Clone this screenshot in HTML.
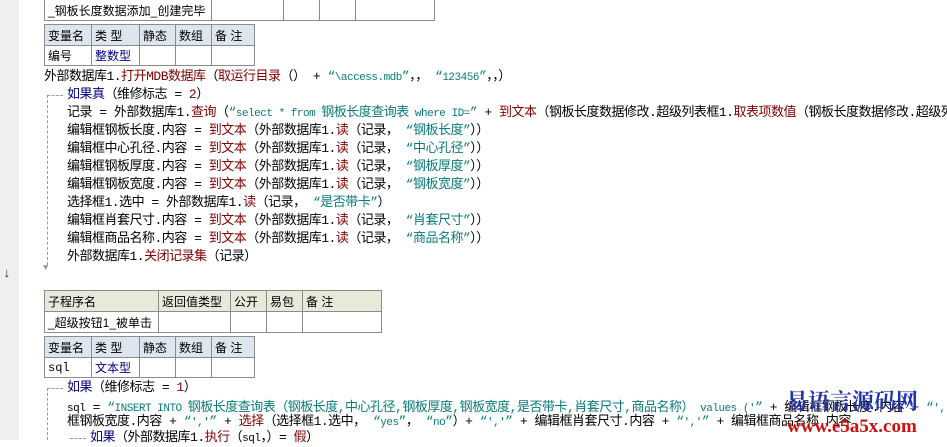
<!DOCTYPE html>
<html><head><meta charset="utf-8"><style>
html,body{margin:0;padding:0;}
body{width:947px;height:440px;overflow:hidden;background:#fff;position:relative;font-family:"Liberation Mono","Noto Sans CJK SC",monospace;font-size:13px;color:#000;}
.gut{position:absolute;left:0;top:0;width:19px;height:440px;background:#f0f0f0;}
.l{position:absolute;white-space:pre;line-height:16px;height:16px;letter-spacing:-0.5px;}
.k{color:#000080}.f{color:#800000}.s{color:#0a7a7a}.m{font-family:"Liberation Mono",monospace;font-size:11px;}
table{position:absolute;border-collapse:collapse;table-layout:fixed;font-family:"Liberation Sans","Noto Sans CJK SC",sans-serif;}
td{border:1px solid #8c8c8c;padding:0 2px 0 3px;height:19px;font-size:12px;white-space:nowrap;overflow:hidden;box-sizing:border-box;}
.hb td{background:#dde5ee;}
.hg td{background:#e6ead9;}
.t{color:#000080}
.dash{position:absolute;border-left:1px dashed #999;}
.dh{position:absolute;border-top:1px dashed #999;height:0;}
.wm1{position:absolute;left:786px;top:389px;font-family:"Noto Serif CJK SC",serif;font-weight:bold;font-size:22px;line-height:24px;color:#2233aa;white-space:nowrap;}
.wm2{position:absolute;left:787px;top:416px;font-family:"Liberation Serif",serif;font-weight:bold;font-size:19px;line-height:22px;color:#cc1111;white-space:nowrap;}
</style></head><body>
<div class="gut"></div>
<div class="l" style="left:3px;top:266px;color:#1a2a6a;font-weight:bold;">↓</div>

<table style="left:44px;top:-1px;width:390px;"><colgroup><col style="width:167px"><col style="width:72px"><col style="width:36px"><col style="width:36px"><col style="width:79px"></colgroup><tr>
<td style="height:21px">_钢板长度数据添加_创建完毕</td><td></td><td></td><td></td><td></td></tr></table>

<table style="left:44px;top:24px;width:210px;"><colgroup><col style="width:47px"><col style="width:48px"><col style="width:36px"><col style="width:36px"><col style="width:43px"></colgroup>
<tr class="hb"><td style="height:21px">变量名</td><td>类 型</td><td>静态</td><td>数组</td><td>备 注</td></tr>
<tr><td style="height:20px">编号</td><td class="t">整数型</td><td></td><td></td><td></td></tr></table>

<div class="l" style="left:44px;top:69px;">外部数据库1.<span class="f">打开MDB数据库</span>（<span class="f">取运行目录</span>（） + <span class="s">“<span class="m">\access.mdb</span>”</span>，， <span class="s">“<span class="m">123456</span>”</span>，，）</div>
<div class="dh" style="left:47px;top:95px;width:16px;"></div>
<div class="dash" style="left:47px;top:95px;height:170px;"></div>
<div class="l" style="left:43px;top:260px;color:#999;font-size:9px;">▼</div>
<div class="l" style="left:67px;top:87px;"><span class="k">如果真</span>（维修标志 = <span class="f">2</span>）</div>
<div class="l" style="left:67px;top:105px;">记录 = 外部数据库1.<span class="f">查询</span>（<span class="s">“<span class="m">select * from </span>钢板长度查询表<span class="m"> where ID=</span>”</span> + <span class="f">到文本</span>（钢板长度数据修改.超级列表框1.<span class="f">取表项数值</span>（钢板长度数据修改.超级列表框1</div>
<div class="l" style="left:67px;top:123px;">编辑框钢板长度.内容 = <span class="f">到文本</span>（外部数据库1.<span class="f">读</span>（记录， <span class="s">“钢板长度”</span>））</div>
<div class="l" style="left:67px;top:141px;">编辑框中心孔径.内容 = <span class="f">到文本</span>（外部数据库1.<span class="f">读</span>（记录， <span class="s">“中心孔径”</span>））</div>
<div class="l" style="left:67px;top:159px;">编辑框钢板厚度.内容 = <span class="f">到文本</span>（外部数据库1.<span class="f">读</span>（记录， <span class="s">“钢板厚度”</span>））</div>
<div class="l" style="left:67px;top:177px;">编辑框钢板宽度.内容 = <span class="f">到文本</span>（外部数据库1.<span class="f">读</span>（记录， <span class="s">“钢板宽度”</span>））</div>
<div class="l" style="left:67px;top:195px;">选择框1.选中 = 外部数据库1.<span class="f">读</span>（记录， <span class="s">“是否带卡”</span>）</div>
<div class="l" style="left:67px;top:213px;">编辑框肖套尺寸.内容 = <span class="f">到文本</span>（外部数据库1.<span class="f">读</span>（记录， <span class="s">“肖套尺寸”</span>））</div>
<div class="l" style="left:67px;top:231px;">编辑框商品名称.内容 = <span class="f">到文本</span>（外部数据库1.<span class="f">读</span>（记录， <span class="s">“商品名称”</span>））</div>
<div class="l" style="left:67px;top:249px;">外部数据库1.<span class="f">关闭记录集</span>（记录）</div>

<table style="left:44px;top:290px;width:337px;"><colgroup><col style="width:114px"><col style="width:72px"><col style="width:36px"><col style="width:36px"><col style="width:79px"></colgroup>
<tr class="hg"><td style="height:21px">子程序名</td><td>返回值类型</td><td>公开</td><td>易包</td><td>备 注</td></tr>
<tr><td style="height:21px">_超级按钮1_被单击</td><td></td><td></td><td></td><td></td></tr></table>

<table style="left:44px;top:336px;width:210px;"><colgroup><col style="width:47px"><col style="width:48px"><col style="width:36px"><col style="width:36px"><col style="width:43px"></colgroup>
<tr class="hb"><td style="height:21px">变量名</td><td>类 型</td><td>静态</td><td>数组</td><td>备 注</td></tr>
<tr><td class="m" style="font-size:12px;height:20px">sql</td><td class="t">文本型</td><td></td><td></td><td></td></tr></table>

<div class="dh" style="left:47px;top:388px;width:16px;"></div>
<div class="dash" style="left:47px;top:388px;height:52px;"></div>
<div class="l" style="left:67px;top:380px;"><span class="k">如果</span>（维修标志 = <span class="f">1</span>）</div>
<div class="l" style="left:67px;top:400px;"><span class="m">sql</span> = <span class="s">“<span class="m">INSERT INTO </span>钢板长度查询表（钢板长度,中心孔径,钢板厚度,钢板宽度,是否带卡,肖套尺寸,商品名称）<span class="m"> values ('</span>”</span> + 编辑框钢板长度.内容 + <span class="s">“<span class="m">','</span>”</span></div>
<div class="l" style="left:67px;top:414px;">框钢板宽度.内容 + <span class="s">“<span class="m">','</span>”</span> + <span class="f">选择</span>（选择框1.选中， <span class="s">“<span class="m">yes</span>”</span>， <span class="s">“<span class="m">no</span>”</span>）+ <span class="s">“<span class="m">','</span>”</span> + 编辑框肖套尺寸.内容 + <span class="s">“<span class="m">','</span>”</span> + 编辑框商品名称.内容</div>
<div class="dh" style="left:70px;top:438px;width:16px;"></div>
<div class="l" style="left:90px;top:430px;"><span class="k">如果</span>（外部数据库1.<span class="f">执行</span>（<span class="m">sql</span>，）= <span class="f">假</span>）</div>

<div class="wm1">易语言源码网</div>
<div class="wm2">www.e5a5x.com</div>
</body></html>
